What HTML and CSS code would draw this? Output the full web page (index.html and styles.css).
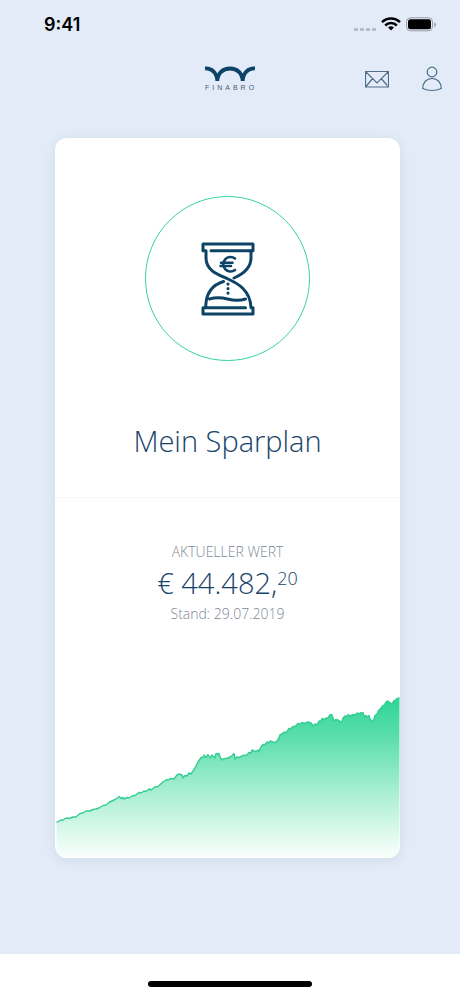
FILE: index.html
```html
<!DOCTYPE html>
<html lang="de">
<head>
<meta charset="utf-8">
<meta name="viewport" content="width=device-width, initial-scale=1">
<title>Finabro</title>
<link rel="stylesheet" href="styles.css">
</head>
<body>
<div class="status">
  <span class="time">9:41</span>
  <svg class="status-icons" width="84" height="18" viewBox="0 0 84 18" aria-hidden="true">
    <g fill="#b5b9c9"><rect x="1" y="12" width="4" height="3" rx="1"/><rect x="7" y="12" width="4" height="3" rx="1"/><rect x="13" y="12" width="4" height="3" rx="1"/><rect x="19" y="12" width="4" height="3" rx="1"/></g>
    <g fill="none" stroke="#000" stroke-width="2.500"><path d="M29 6.200a12.800 12.800 0 0 1 18 0"/><path d="M32.200 9.500a8.200 8.200 0 0 1 11.600 0"/></g>
    <path d="M38 14.500l-3-2.900a4.300 4.300 0 0 1 6 0z"/>
    <rect x="53.500" y="1.800" width="26" height="13" rx="4" fill="none" stroke="#9c99a5"/>
    <rect x="55" y="3.300" width="23" height="10" rx="2.500"/>
    <path d="M81.300 6.300v5q1.800-.6 1.800-2.500T81.300 6.300z" fill="#9c99a5"/>
  </svg>
</div>
<header class="header">
  <div class="logo">
    <svg width="50" height="15" viewBox="0 0 50 15" aria-hidden="true"><path d="M0 2.500C7 2 12 7 12.300 15C12.600 7 18 2.500 25 2.500S37.400 7 37.700 15C38 7 43 2 50 2.500" fill="none" stroke="#0d4366" stroke-width="3.800"/></svg>
    <span class="logo-name">FINABRO</span>
  </div>
  <nav class="actions">
    <button type="button" aria-label="Nachrichten"><svg width="24" height="26" viewBox="0 0 24 26"><path d="M.5 5.500h23v15.500H.5zM.5 5.500L12 17 23.500 5.500M.5 21L7.700 12.500M23.500 21l-7.200-8.500"/></svg></button>
    <button type="button" aria-label="Profil"><svg width="20" height="26" viewBox="0 0 20 26"><circle cx="10" cy="6" r="4.800"/><path d="M.7 22.500C.7 16.500 4.500 12.500 10 12.500s9.300 4 9.300 10Q10 26.500.7 22.500z"/></svg></button>
  </nav>
</header>
<main class="main">
  <article class="card">
    <section class="plan">
      <div class="ring">
        <svg width="54" height="74" viewBox="0 0 54 74" fill="none" stroke="#0d4366" stroke-width="3" stroke-linecap="round" stroke-linejoin="round" aria-hidden="true">
          <path d="M10 8.700h42V2H2v6.700h3V16C5 29 18 33 27 37S49.500 48 50 65.700h2V72H2v-6.300M2 65.700h42.500"/>
          <path d="M50 9v7c0 11-9 16.500-17 20M22.500 39.500C11 43 5 51 4.700 64.500M8.500 57c7-2 12-1.500 18 0s12 2 18 0"/>
          <path d="M34 16.500a7.300 7.300 0 1 0 0 11.500M20 20.700h11.500M19.500 24h10.500" stroke-width="2.600"/>
          <path d="M27 42v.1M27 46.500v.1M27 51v.1" stroke-width="3.200"/>
        </svg>
      </div>
      <h1>Mein Sparplan</h1>
    </section>
    <section class="value">
      <p class="caption">AKTUELLER WERT</p>
      <p class="amount">€ 44.482,<span class="cents">20</span></p>
      <p class="caption">Stand: 29.07.2019</p>
    </section>
    <svg class="chart" viewBox="0 0 345 168" preserveAspectRatio="none" role="img" aria-label="Wertentwicklung">
      <defs><linearGradient id="fill" gradientUnits="userSpaceOnUse" x1="0" y1="8" x2="0" y2="168"><stop offset="0" stop-color="#2fd596"/><stop offset=".22" stop-color="#57dda9"/><stop offset=".6" stop-color="#abefd5"/><stop offset="1" stop-color="#fcfffd"/></linearGradient></defs>
      <path id="area" fill="url(#fill)" d="M1.500 132.500L5 130.500 8 130 11 128 14 128.500 18 127 21 127 25 123.500 28 123 31 121 35 121 38 119.500 41 119 44 118 48 115.500 51 115 54 112.500 57 111 60 109.500 63 107.500 64 106.500 66 108.500 68 107.500 69 109 72 107.500 74 108 77 106 80 105.500 84 102.500 86 103 89 101 91 101.500 94 99 96 100 100 97 103 96.500 108 92 111 90 114 89.500 116 88.500 119 89 122 85 124 84 127 85 128 88 130 85.500 132 86 134 83 136 84 138 81 140 78 143 72 146 67.500 148 67.500 149 65 151 67.500 153 64.500 155 68 157 65 159 67 160 68 161 63.500 163 64 164 63.500 165 67 167 70 169 68.500 172 68.500 175 67 177 65.500 179 63.500 180 69 182 67 184 67.500 188 65.500 192 65 194 62.500 196 63 197 60 199 61 201 61.500 203 60 204 61.500 206 57 208 54.500 210 54.500 212 52 214 53 215 51 218 52 221 52.500 224 48 225 45 227 44 229 42 231 43 232 41.500 234 38.500 236 38.500 238 36.500 240 36.500 243 33.500 245 34 247 32.500 250 33.500 253 32 256 33 258 36 260 34 262 34.500 264 31 266 31 267 28.500 269 29.500 271 28 273 28 275 24.500 277 25 279 31 281 29.500 284 30.500 285 32 287 31.500 288 28 290 26 292 26.500 293 24.500 295 26 298 24.500 300 25 302 23 304 24 306 22.500 307 24 308 22.500 309 26.500 311 25.500 312 27 314 25.500 315 29 318 32 320 25.500 322 24 323 21.500 326 18 328 15.500 329 15.500 331 12 333 11 335 13 337 14 339 10.500 340 11 342 8.500 344.500 8V168H1.500z"/>
      <path class="line" d=""/>
    </svg>
  </article>
</main>
<footer class="home"><span class="home-bar"></span></footer>
<script src="chart.js"></script>
</body>
</html>
```
FILE: styles.css
```css
* { box-sizing: border-box; }

body {
  margin: 0;
  min-height: 100vh;
  display: flex;
  flex-direction: column;
  background: #e3ebf8;
  color: #174469;
  font-family: "Open Sans", sans-serif;
}

h1, p { margin: 0; font-weight: 300; }
svg { display: block; }

.status {
  display: flex;
  align-items: center;
  justify-content: space-between;
  height: 50px;
  padding: 0 23px 0 44px;
  color: #000;
}
.time { font: 600 18px/22px Inter, sans-serif; }

.header {
  display: grid;
  grid-template-columns: 1fr auto 1fr;
  align-items: center;
  height: 58px;
  padding: 0 18px;
}
.logo { grid-column: 2; display: grid; gap: 2px; width: 50px; }
.logo-name {
  font: 7px/10px "Liberation Sans", sans-serif;
  letter-spacing: 3px;
  color: #476078;
}
.actions { display: flex; justify-content: flex-end; gap: 33px; }
.actions button { padding: 0; border: 0; background: none; }
.actions svg { fill: none; stroke: #4e6f88; stroke-width: 1.2px; }

.main { flex: 1; display: flex; padding: 30px 60px 96px 55px; }
.card {
  flex: 1;
  display: flex;
  flex-direction: column;
  overflow: hidden;
  border-radius: 12px;
  background: #fff;
  box-shadow: 0 2px 12px #cddce8;
}
.plan {
  display: flex;
  flex-direction: column;
  align-items: center;
  gap: 56px;
  padding: 58px 0 32px;
  border-bottom: 1px solid #f8f8f9;
}
.ring {
  display: grid;
  place-items: center;
  width: 165px;
  height: 165px;
  border: 1px solid #35d39d;
  border-radius: 50%;
}
h1 { font-size: 29px; line-height: 48px; }

.value { padding: 44px 0 64px; text-align: center; }
.caption { font-size: 14px; line-height: 20px; color: #7c8897; }
.amount { font-size: 29px; line-height: 42px; }
.cents { font-size: 18px; vertical-align: 9px; line-height: 1; }

.chart { width: 100%; height: 168px; margin-top: auto; }
.line { fill: none; stroke: #35cd94; stroke-width: 1.4px; stroke-linejoin: round; }

.home {
  display: flex;
  justify-content: center;
  height: 42px;
  padding-top: 27px;
  background: #fff;
}
.home-bar { width: 164px; height: 6px; border-radius: 3px; background: #000; }
```
FILE: chart.js
```js
// Trace the top edge of the filled area.
const area = document.getElementById('area').getAttribute('d');
document.querySelector('.line').setAttribute('d', area.split('V')[0]);
```
